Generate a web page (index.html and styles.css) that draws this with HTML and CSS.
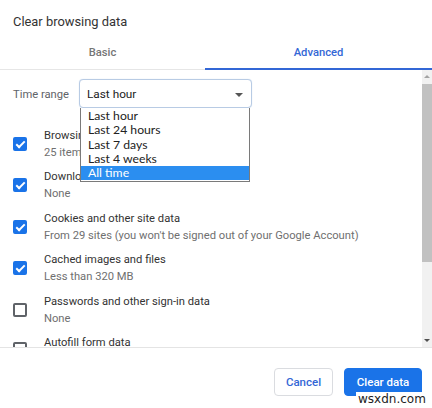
FILE: index.html
```html
<!DOCTYPE html>
<html>
<head>
<meta charset="utf-8">
<link rel="stylesheet" href="styles.css">
</head>
<body>
<div class="dialog">
  <div class="title">Clear browsing data</div>
  <div class="tabs">
    <div class="tab">Basic</div>
    <div class="tab active">Advanced</div>
  </div>
  <div class="content">
    <div class="scrollarea">
      <div class="range-row">
        <span class="range-label">Time range</span>
        <div class="select">
          <span>Last hour</span>
          <span class="arrow"></span>
        </div>
      </div>
      <div class="item">
        <span class="cb checked"></span>
        <div class="texts"><div class="t1">Browsing history</div><div class="t2">25 items</div></div>
      </div>
      <div class="item">
        <span class="cb checked"></span>
        <div class="texts"><div class="t1">Download history</div><div class="t2">None</div></div>
      </div>
      <div class="item">
        <span class="cb checked"></span>
        <div class="texts"><div class="t1">Cookies and other site data</div><div class="t2">From 29 sites (you won't be signed out of your Google Account)</div></div>
      </div>
      <div class="item">
        <span class="cb checked"></span>
        <div class="texts"><div class="t1">Cached images and files</div><div class="t2">Less than 320 MB</div></div>
      </div>
      <div class="item">
        <span class="cb"></span>
        <div class="texts"><div class="t1">Passwords and other sign-in data</div><div class="t2">None</div></div>
      </div>
      <div class="item last">
        <span class="cb"></span>
        <div class="texts"><div class="t1">Autofill form data</div></div>
      </div>
      <ul class="dropdown">
        <li>Last hour</li>
        <li>Last 24 hours</li>
        <li>Last 7 days</li>
        <li>Last 4 weeks</li>
        <li class="sel">All time</li>
      </ul>
    </div>
    <div class="scrollbar">
      <span class="up"></span>
      <div class="track"><div class="thumb"></div></div>
      <span class="down"></span>
    </div>
  </div>
  <div class="footer">
    <button class="btn cancel">Cancel</button>
    <button class="btn primary">Clear data</button>
  </div>
  <div class="watermark">wsxdn.com</div>
</div>
</body>
</html>
```
FILE: styles.css
```css
html, body {
  margin: 0;
  padding: 0;
  background: #fff;
}
body {
  font-family: Roboto, "Liberation Sans", sans-serif;
  color: #333;
}
.dialog {
  width: 432px;
  height: 408px;
  display: flex;
  flex-direction: column;
  position: relative;
  overflow: hidden;
}
.title {
  height: 40px;
  padding-left: 13px;
  font-size: 12.9px;
  line-height: 43px;
  color: #333;
}
.tabs {
  display: flex;
  height: 29px;
  border-bottom: 1px solid #e6e6e6;
}
.tab {
  flex: 0 0 205px;
  text-align: center;
  font-size: 11.2px;
  font-weight: 500;
  color: #757575;
  line-height: 26px;
}
.tab.active {
  flex: 1;
  color: #3367d6;
  border-bottom: 2px solid #3367d6;
  margin-bottom: -1px;
}
.content {
  height: 277px;
  display: flex;
  border-bottom: 1px solid #e4e4e4;
}
.scrollarea {
  flex: 1;
  position: relative;
  overflow: hidden;
}
.range-row {
  display: flex;
  align-items: center;
  padding: 9px 0 0 13px;
  height: 29px;
}
.range-label {
  font-size: 11.2px;
  color: #5f6368;
  width: 66px;
  padding-top: 1px;
}
.select {
  box-sizing: border-box;
  width: 173px;
  height: 29px;
  border: 1px solid #b8cbe4;
  border-radius: 4px;
  display: flex;
  align-items: center;
  justify-content: space-between;
  padding: 1px 8px 0 7px;
  font-size: 11.8px;
  color: #222;
  background: #fff;
  box-shadow: 0 0 1px rgba(120, 160, 220, 0.4);
}
.arrow {
  width: 0;
  height: 0;
  border-left: 4.5px solid transparent;
  border-right: 4.5px solid transparent;
  border-top: 4.5px solid #555;
  margin-top: 1px;
}
.item {
  display: flex;
  align-items: center;
  height: 34px;
  margin-top: 7.5px;
  padding-left: 13px;
}
.item.last {
  height: 16px;
  align-items: flex-start;
}
.item.last .cb {
  margin-top: 8px;
}
.range-row + .item {
  margin-top: 18.5px;
}
.cb {
  box-sizing: border-box;
  width: 14px;
  height: 14px;
  border: 2px solid #5f6368;
  border-radius: 2px;
  margin-right: 17px;
  flex: none;
  position: relative;
}
.cb.checked {
  background: #1a73e8;
  border-color: #1a73e8;
}
.cb.checked::after {
  content: "";
  position: absolute;
  left: 3px;
  top: 0px;
  width: 3px;
  height: 7px;
  border-right: 2px solid #fff;
  border-bottom: 2px solid #fff;
  transform: rotate(45deg);
}
.texts {
  font-size: 11.2px;
  line-height: 17px;
  align-self: flex-start;
}
.item.last .texts {
  line-height: 15px;
  margin-top: 1px;
}
.t1 { color: #333; }
.t2 { color: #6f6f6f; }
.dropdown {
  position: absolute;
  left: 80px;
  top: 38px;
  width: 170px;
  margin: 0;
  padding: 1px 0 1px;
  list-style: none;
  background: #fff;
  border: 1px solid #7a7a7a;
  border-top: none;
  box-sizing: border-box;
  font-family: Lato, "Open Sans", sans-serif;
  font-size: 12.2px;
  color: #222;
}
.dropdown li {
  height: 14.3px;
  line-height: 14.3px;
  padding-left: 7px;
}
.dropdown li.sel {
  background: #2b8ef0;
  color: #fff;
}
.scrollbar {
  width: 10px;
  background: #f1f1f1;
  display: flex;
  flex-direction: column;
  align-items: center;
}
.up, .down {
  height: 14px;
  width: 10px;
  position: relative;
  flex: none;
}
.up::after, .down::after {
  content: "";
  position: absolute;
  left: 2px;
  border-left: 3px solid transparent;
  border-right: 3px solid transparent;
}
.up::after {
  top: 5px;
  border-bottom: 3px solid #a3a3a3;
}
.down::after {
  top: 6px;
  border-top: 3px solid #505050;
}
.track {
  flex: 1;
  width: 100%;
}
.thumb {
  width: 100%;
  height: 178px;
  background: #c1c1c1;
}
.footer {
  flex: 1;
  display: flex;
  justify-content: flex-end;
  align-items: flex-start;
  gap: 11px;
  padding: 20px 10px 0 0;
}
.btn {
  height: 28px;
  border-radius: 4px;
  font-family: Roboto, "Liberation Sans", sans-serif;
  font-size: 11.5px;
  font-weight: 500;
  padding: 0;
  cursor: pointer;
}
.cancel {
  width: 59px;
  background: #fff;
  border: 1px solid #dadce0;
  color: #3367d6;
}
.primary {
  width: 78px;
  background: #1a73e8;
  border: 1px solid #1a73e8;
  color: #fff;
}
.watermark {
  position: absolute;
  left: 356px;
  top: 392px;
  padding: 0 2px;
  background: #fff;
  font-family: "DejaVu Sans", sans-serif;
  font-size: 12px;
  line-height: 14px;
  color: #222;
}
```
